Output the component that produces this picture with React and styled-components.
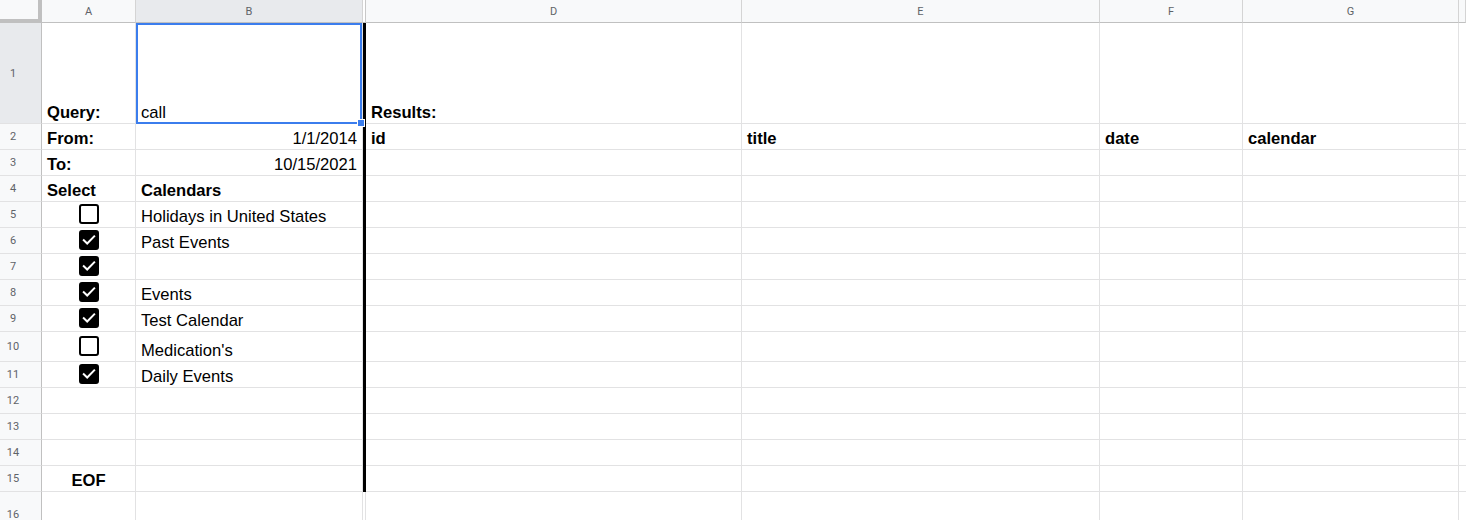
import React from "react";
import styled, { createGlobalStyle } from "styled-components";

const GlobalStyle = createGlobalStyle`
  html, body {
    margin: 0;
    padding: 0;
    background: #fff;
    overflow: hidden;
  }
  * {
    box-sizing: border-box;
  }
`;

const COLUMNS = "42px 94px 227px 3px 376px 358px 143px 216px 1fr";

const Sheet = styled.div`
  width: 1466px;
  height: 520px;
  overflow: hidden;
  font-family: "Liberation Sans", Arial, sans-serif;
  font-size: 16.6px;
  color: #000;
`;

const Row = styled.div`
  display: grid;
  grid-template-columns: ${COLUMNS};
  height: ${(p) => p.$h}px;
`;

const Corner = styled.div`
  background: #f8f9fa;
  border-right: 4px solid #c0c0c0;
  border-bottom: 4px solid #c0c0c0;
`;

const ColHead = styled.div`
  display: flex;
  align-items: center;
  justify-content: center;
  font-family: Roboto, "Liberation Sans", sans-serif;
  font-size: 11px;
  color: #5f6368;
  background: ${(p) => (p.$active ? "#e8eaed" : "#f8f9fa")};
  border-right: 1px solid #d4d4d4;
  border-bottom: 1px solid #c0c0c0;
`;

const HiddenHead = styled.div`
  background: #fff;
  border-bottom: 1px solid #c0c0c0;
  border-right: 1px solid #c8c8c8;
`;

const RowHead = styled.div`
  display: flex;
  align-items: center;
  font-family: Roboto, "Liberation Sans", sans-serif;
  font-size: 11px;
  color: #5f6368;
  background: ${(p) => (p.$active ? "#e8eaed" : "#f8f9fa")};
  border-right: 1px solid #c0c0c0;
  border-bottom: 1px solid #e2e2e3;

  span {
    width: 26px;
    text-align: center;
  }
`;

const Cell = styled.div`
  position: relative;
  display: flex;
  align-items: ${(p) => (p.$center ? "center" : "flex-end")};
  justify-content: ${(p) =>
    p.$align === "right" ? "flex-end" : p.$align === "center" ? "center" : "flex-start"};
  padding: 0 5px 1px;
  line-height: 19px;
  white-space: nowrap;
  font-weight: ${(p) => (p.$bold ? 700 : 400)};
  border-right: 1px solid #e2e2e3;
  border-bottom: 1px solid #e2e2e3;
`;

const Gap = styled.div`
  background: ${(p) => (p.$bar ? "#000" : "#fff")};
  border-bottom: ${(p) => (p.$bar ? "none" : "1px solid #e2e2e3")};
  border-right: ${(p) => (p.$bar ? "none" : "1px solid #e2e2e3")};
`;

const Selection = styled.div`
  position: absolute;
  top: 0;
  left: 0;
  right: 0;
  bottom: -1px;
  border: 2px solid #3b7ded;
  pointer-events: none;
`;

const Handle = styled.div`
  position: absolute;
  right: -3px;
  bottom: -4px;
  width: 8px;
  height: 8px;
  background: #3b7ded;
  border: 1px solid #fff;
  z-index: 2;
`;

const Box = styled.div`
  width: 20px;
  height: 20px;
  border: 2px solid #000;
  border-radius: 3px;
  background: ${(p) => (p.$checked ? "#000" : "#fff")};
  display: flex;
  align-items: center;
  justify-content: center;
`;

const Checkbox = ({ checked }) => (
  <Box $checked={checked}>
    {checked && (
      <svg width="16" height="16" viewBox="0 0 16 16">
        <polyline
          points="2.8,8.2 6.2,11.5 13.2,4.3"
          fill="none"
          stroke="#fff"
          strokeWidth="2"
          strokeLinecap="square"
        />
      </svg>
    )}
  </Box>
);

const headers = [
  { key: "A", label: "A" },
  { key: "B", label: "B", active: true },
  { key: "C", hidden: true },
  { key: "D", label: "D" },
  { key: "E", label: "E" },
  { key: "F", label: "F" },
  { key: "G", label: "G" },
  { key: "H", label: "" },
];

const bold = (text, align) => ({ text, bold: true, align });

const rows = [
  { n: 1, h: 101, A: bold("Query:"), B: { text: "call", selected: true }, D: bold("Results:") },
  { n: 2, h: 26, A: bold("From:"), B: { text: "1/1/2014", align: "right" }, D: bold("id"), E: bold("title"), F: bold("date"), G: bold("calendar") },
  { n: 3, h: 26, A: bold("To:"), B: { text: "10/15/2021", align: "right" } },
  { n: 4, h: 26, A: bold("Select"), B: bold("Calendars") },
  { n: 5, h: 26, check: false, B: { text: "Holidays in United States" } },
  { n: 6, h: 26, check: true, B: { text: "Past Events" } },
  { n: 7, h: 26, check: true },
  { n: 8, h: 26, check: true, B: { text: "Events" } },
  { n: 9, h: 26, check: true, B: { text: "Test Calendar" } },
  { n: 10, h: 30, check: false, B: { text: "Medication's" } },
  { n: 11, h: 26, check: true, B: { text: "Daily Events" } },
  { n: 12, h: 26 },
  { n: 13, h: 26 },
  { n: 14, h: 26 },
  { n: 15, h: 26, A: bold("EOF", "center") },
  { n: 16, h: 46, noBar: true },
];

const renderCell = (cell) => {
  if (!cell) return <Cell />;
  return (
    <Cell $bold={cell.bold} $align={cell.align}>
      {cell.text}
      {cell.selected && (
        <>
          <Selection />
          <Handle />
        </>
      )}
    </Cell>
  );
};

const App = () => {
  return (
    <Sheet>
      <GlobalStyle />
      <Row $h={23}>
        <Corner />
        {headers.map((h) =>
          h.hidden ? (
            <HiddenHead key={h.key} />
          ) : (
            <ColHead key={h.key} $active={h.active}>
              {h.label}
            </ColHead>
          )
        )}
      </Row>
      {rows.map((r) => (
        <Row key={r.n} $h={r.h}>
          <RowHead $active={r.n === 1}>
            <span>{r.n}</span>
          </RowHead>
          {r.check !== undefined ? (
            <Cell $center $align="center">
              <Checkbox checked={r.check} />
            </Cell>
          ) : (
            renderCell(r.A)
          )}
          {renderCell(r.B)}
          <Gap $bar={!r.noBar} />
          {renderCell(r.D)}
          {renderCell(r.E)}
          {renderCell(r.F)}
          {renderCell(r.G)}
          <Cell />
        </Row>
      ))}
    </Sheet>
  );
};

export default App;
